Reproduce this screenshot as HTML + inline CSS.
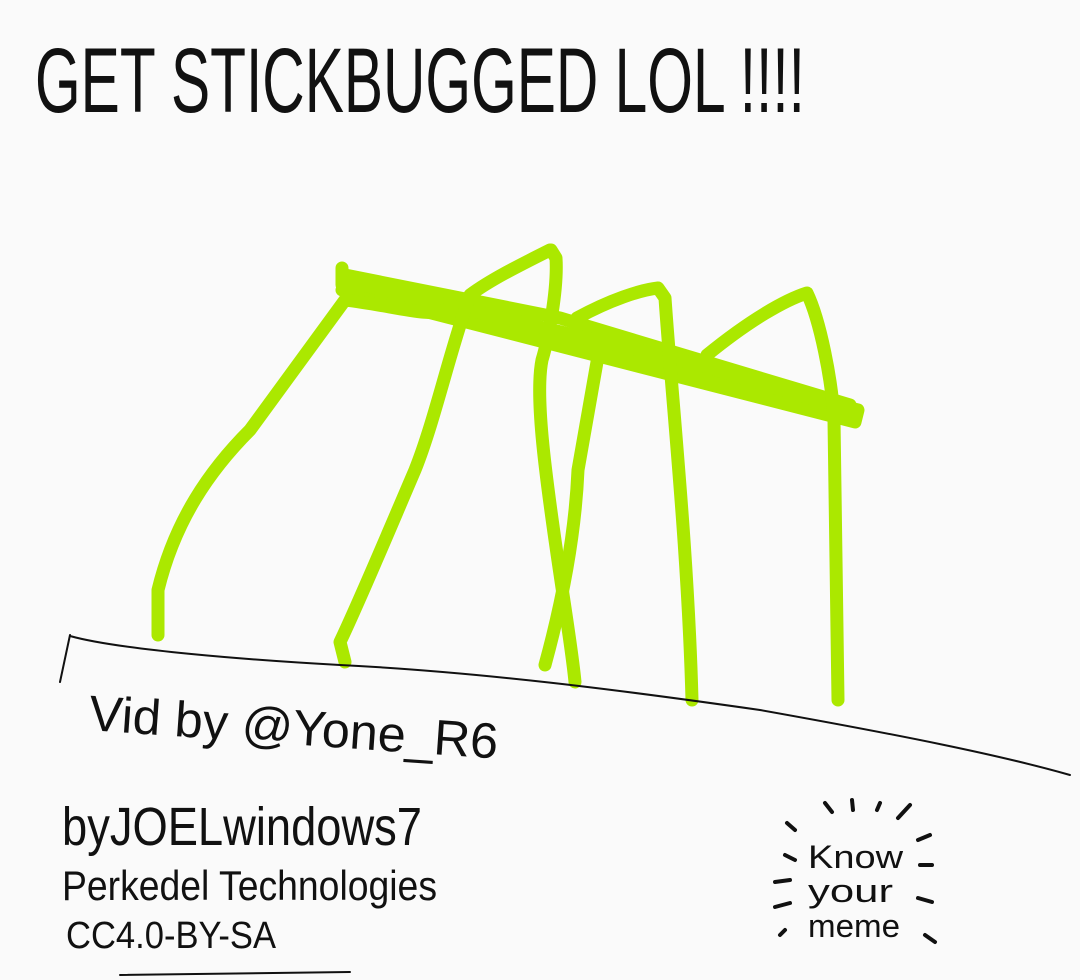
<!DOCTYPE html>
<html><head><meta charset="utf-8"><style>
html,body{margin:0;padding:0;background:#fafafa;}
svg{display:block}
text{font-family:"Liberation Sans Narrow","Liberation Sans",sans-serif;fill:#111;}
</style></head><body>
<svg width="1080" height="980" viewBox="0 0 1080 980" xmlns="http://www.w3.org/2000/svg">
<rect width="1080" height="980" fill="#fafafa"/>
<text x="35" y="112" font-size="92" textLength="770" lengthAdjust="spacingAndGlyphs">GET STICKBUGGED LOL !!!!</text>
<g fill="none" stroke="#abe800" stroke-width="13" stroke-linecap="round" stroke-linejoin="round">
<path d="M342 268 L342 285 L858 410 L855 422 L342 290"/>
<path d="M345 275 L560 318 L850 405"/>
<path d="M350 282 L700 365 L855 412"/>
<path d="M158 635 L158 590 C175 520 210 470 250 430 L345 300 C390 305 430 318 445 310"/>
<path d="M550 250 C520 265 490 280 470 295 C450 350 435 420 415 470 C385 540 360 600 340 642 L345 662"/>
<path d="M551 250 L556 258 C558 290 548 340 542 360 C535 395 545 470 555 540 C565 610 572 650 575 682"/>
<path d="M545 665 C560 610 575 540 578 470 L597 362"/>
<path d="M577 318 C610 300 640 290 658 288 L665 298 C672 400 688 550 692 700"/>
<path d="M707 355 C750 320 785 300 807 293 C820 320 832 380 834 420 L838 700"/>
</g>
<g fill="none" stroke="#111" stroke-width="2" stroke-linecap="round">
<path d="M70 635 L60 682"/>
<path d="M70 636 C120 650 250 660 340 665 C480 672 620 690 760 710 C900 735 1000 755 1070 775"/>
<path d="M120 975 L350 972"/>
</g>
<text x="88" y="730" font-size="50" transform="rotate(4 88 730)" textLength="410" lengthAdjust="spacingAndGlyphs">Vid by @Yone_R6</text>
<text x="62" y="845" font-size="54" textLength="360" lengthAdjust="spacingAndGlyphs">byJOELwindows7</text>
<text x="62" y="900" font-size="42" textLength="375" lengthAdjust="spacingAndGlyphs">Perkedel Technologies</text>
<text x="66" y="948" font-size="38" textLength="210" lengthAdjust="spacingAndGlyphs">CC4.0-BY-SA</text>
<text x="808" y="868" font-size="32" textLength="95" lengthAdjust="spacingAndGlyphs">Know</text>
<text x="808" y="902" font-size="32" textLength="85" lengthAdjust="spacingAndGlyphs">your</text>
<text x="808" y="937" font-size="32" textLength="92" lengthAdjust="spacingAndGlyphs">meme</text>
<g stroke="#111" stroke-width="4" stroke-linecap="round">
<path d="M825 803 L832 812"/><path d="M852 800 L853 810"/><path d="M877 810 L880 803"/><path d="M898 818 L910 805"/>
<path d="M787 823 L795 830"/><path d="M918 840 L930 835"/><path d="M785 855 L795 860"/><path d="M920 865 L932 865"/>
<path d="M775 882 L790 880"/><path d="M918 898 L932 902"/><path d="M775 907 L790 903"/><path d="M780 935 L785 930"/><path d="M925 935 L935 942"/>
</g>
</svg>
</body></html>
